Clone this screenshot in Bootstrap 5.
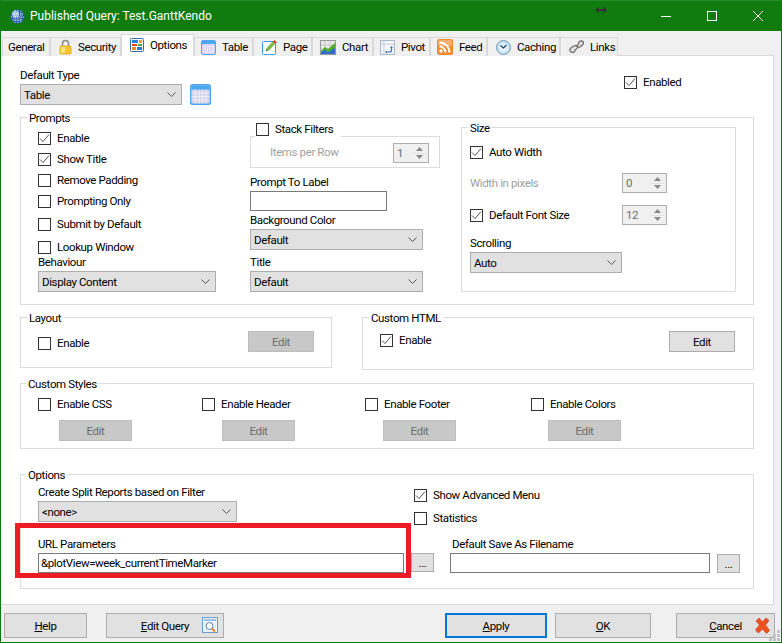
<!DOCTYPE html>
<html lang="en">
<head>
<meta charset="UTF-8" />
<title>Published Query: Test.GanttKendo</title>
<link href="https://cdn.jsdelivr.net/npm/bootstrap@5.3.0/dist/css/bootstrap.min.css" rel="stylesheet" />
<style>
  html, body { margin: 0; height: 100%; overflow: hidden; background: #f0f0f0; }
  body, .form-select, .form-control, .btn { font: 11.5px/16px Roboto, "Liberation Sans", sans-serif; letter-spacing: -.38px; color: #000; }

  /* window */
  .win { position: relative; width: 782px; height: 643px; border: 1px solid #107c10; border-top: 0; background: #f0f0f0; }
  .titlebar { height: 31px; background: #107c10; border-top: 1px solid #2a8a2a; color: #fff; padding-left: 9px; flex: none; }
  .titlebar .ttl { margin-left: 5px; font-size: 12px; letter-spacing: 0; }
  .capbtn { width: 46px; height: 30px; display: flex; align-items: center; justify-content: center; }
  .size-cursor { position: absolute; left: 594px; top: 6px; }

  /* tabs */
  .tabstrip { height: 24px; flex: none; padding-left: 1px; align-items: flex-end; border: 0; flex-wrap: nowrap; position: relative; z-index: 1; }
  .tabstrip .nav-link { height: 19px; padding: 0; border: 1px solid #d9d9d9; border-bottom: 0; border-radius: 0; background: #f0f0f0; color: #000; display: flex; align-items: center; }
  .tabstrip .nav-link + .nav-link { border-left: 0; }
  .tabstrip .nav-link.active { height: 22px; margin-bottom: -1px; padding-bottom: 2px; background: #fff; border-left: 1px solid #d9d9d9; border-color: #d9d9d9; position: relative; z-index: 2; }
  .tabstrip .nav-link svg { margin-right: 6px; flex: none; }
  .t1 { width: 48px; padding-left: 5px !important; }
  .t2 { width: 71px; padding-left: 8px !important; }
  .t3 { width: 73px; padding-left: 8px !important; }
  .t4 { width: 59px; padding-left: 6px !important; }
  .t5 { width: 59px; padding-left: 8px !important; }
  .t6 { width: 61px; padding-left: 7px !important; }
  .t7 { width: 57px; padding-left: 6px !important; }
  .t8 { width: 57px; padding-left: 6px !important; }
  .t9 { width: 73px; padding-left: 8px !important; }
  .t10 { width: 58px; padding-left: 8px !important; }

  .tabpane { height: 550px; flex: none; width: 773px; background: #fff; border: 1px solid #d9d9d9; border-left: 0; padding: 11px 0 0 19px; }

  /* group boxes */
  .grp { border: 1px solid #dcdcdc; padding: 0; margin: 0; }
  .grp-full { width: 734px; }
  .grp > legend { float: none; width: auto; height: 16px; font-size: 11.5px; line-height: 18px; margin: 0 0 0 6px; padding: 0 2px; }
  .grp.lg5 > legend { margin-left: 5px; }
  .lbl { display: block; height: 16px; line-height: 16px; margin: 0 0 1px; white-space: nowrap; }
  .lbl-off { color: #a0a0a0; }

  /* controls */
  .form-select.sel { height: 21px; min-height: 0; padding: 0 16px 0 3px; border: 1px solid #adadad; border-radius: 0; background-color: #e1e1e1; box-shadow: none;
    background-image: url("data:image/svg+xml,%3csvg xmlns='http://www.w3.org/2000/svg' viewBox='0 0 9 5'%3e%3cpath fill='none' stroke='%23555' d='M.5.5l4 4 4-4'/%3e%3c/svg%3e");
    background-size: 9px 5px; background-position: right 5px center; }
  .form-control.txt { height: 20px; min-height: 0; padding: 0 2px; border: 1px solid #7a7a7a; border-radius: 0; background: #fff; box-shadow: none; }
  .chk { height: 16px; white-space: nowrap; }
  .chk .form-check-input { width: 13px; height: 13px; margin: 0 6px 0 0; border: 1px solid #333; border-radius: 0; background-color: #fff; flex: none; box-shadow: none; }
  .chk .form-check-input:checked { background-color: #fff; border-color: #333; background-size: 11px 11px;
    background-image: url("data:image/svg+xml,%3csvg xmlns='http://www.w3.org/2000/svg' viewBox='0 0 11 11'%3e%3cpath fill='none' stroke='%23555' d='M1 5.500l3 3 6-7'/%3e%3c/svg%3e"); }
  .chk .form-check-label { line-height: 16px; }

  .spin { height: 20px; border: 1px solid #adadad; background: #f0f0f0; color: #6d6d6d; padding-left: 3px; line-height: 18px; }
  .spin-w { width: 45px; }
  .spin-n { width: 36px; }
  .spin-arrows { width: 15px; margin: 1px 1px 1px auto; background: #e4e4e4; gap: 1px; }
  .spin-arrows span { flex: 1; background: #f0f0f0; display: flex; align-items: center; justify-content: center; }

  .btn.wbtn { height: 25px; padding: 0; border: 1px solid #adadad; border-radius: 0; background: #e1e1e1; color: #000; display: flex; align-items: center; justify-content: center; }
  .btn.wbtn-edit { height: 21px; width: 66px; }
  .btn.wbtn-off, .btn.wbtn-off:disabled { background: #c8c8c8; border-color: #bdbdbd; color: #6d6d6d; opacity: 1; }
  .btn.wbtn-dots { height: 19px; width: 23px; flex: none; margin-left: 7px; line-height: 10px; }

  /* prompts group */
  .prompts { height: 196px; margin-top: 4px; }
  .p-left { width: 178px; padding-top: 5px; margin: 0 34px 0 17px; }
  .p-left .chk { margin-bottom: 5px; }
  .p-left .chk.wide { margin-bottom: 7px; }
  .p-left .chk.last { margin-bottom: -1px; }
  .p-mid { width: 190px; margin-right: 21px; }
  .stack-head { position: relative; z-index: 1; width: max-content; margin: -4px 0 -1px 5px; padding: 0 8px 0 1px; background: #fff; }
  .stack { height: 32px; border: 1px solid #dcdcdc; padding: 6px 10px 0 19px; }
  .p-mid .after-stack { margin-top: 6px; }
  .w137 { width: 137px; }
  .w173 { width: 173px; }
  .w162 { width: 162px; }
  .mt-1px { margin-top: 1px; }
  .mt-4px { margin-top: 4px; }
  .enabled-chk { margin: 7px 0 0 413px; }
  .sizebox { width: 275px; height: 173px; margin-top: -6px; }
  .sizebody { padding: 9px 0 0 8px; width: 205px; }
  .sizebody .r1 { height: 20px; margin-top: 13px; }
  .sizebody .r2 { height: 20px; margin-top: 12px; }
  .sizebody .r3 { margin-top: 10px; }
  .w152 { width: 152px; }

  /* layout / custom html */
  .layoutbox { width: 312px; height: 59px; margin-right: 30px; }
  .htmlbox { width: 392px; height: 61px; }
  .editrow { padding: 6px 17px 0; }
  .htmlbox .editrow { padding-right: 18px; }
  .editrow .low { margin-top: 4px; }

  /* custom styles */
  .stylesbox { height: 74px; margin-top: 5px; }
  .stylesgrid { display: grid; grid-template-columns: 164px 163px 166px 120px; padding: 5px 0 0 17px; }
  .stylesgrid .btn { width: 73px; height: 21px; margin-top: 8px; }
  .stylesgrid > div:nth-child(1) .btn { margin-left: 21px; }
  .stylesgrid > div:nth-child(2) .btn { margin-left: 20px; }
  .stylesgrid > div:nth-child(3) .btn { margin-left: 18px; }
  .stylesgrid > div:nth-child(4) .btn { margin-left: 17px; }

  /* options */
  .optionsbox { height: 123px; margin-top: 17px; }
  .opt-top { height: 38px; padding-left: 17px; margin: 2px 0 14px; }
  .opt-left { width: 376px; }
  .opt-left .form-select { width: 199px; }
  .opt-right { padding-top: 3px; }
  .opt-right .chk { margin-bottom: 7px; }
  .opt-bottom { padding-left: 17px; }
  .url-wrap { position: relative; margin-right: 16px; }
  .w366 { width: 366px; }
  .w260 { width: 260px; }
  .red-mark { position: absolute; left: -23px; top: -13px; width: 396px; height: 55px; border: 5px solid #ed1c24; pointer-events: none; }
  .save-wrap .lbl { margin-left: 2px; }
  .save-wrap .btn { margin-top: 1px; }

  /* footer */
  .footbar { flex: 1; padding: 8px 6px 0 3px; position: relative; }
  .b-help { width: 83px; margin-right: 19px; }
  .b-edit { width: 118px; position: relative; }
  .b-apply { width: 102px; margin-left: auto; margin-right: 8px; border: 2px solid #0078d7 !important; }
  .b-ok { width: 96px; margin-right: 25px; }
  .b-cancel { width: 99px; position: relative; }
  .b-edit svg, .b-cancel svg { position: absolute; right: 4px; top: 3px; }
  .grip { position: absolute; right: 1px; bottom: 1px; }
</style>
</head>
<body>
<svg width="0" height="0" class="d-block position-absolute">
  <symbol id="ico-table" viewBox="0 0 15 15">
    <rect x=".5" y=".5" width="14" height="14" rx="1.500" fill="#d4d1ea" stroke="#4aa8f0"/>
    <rect x="1" y="1" width="13" height="3" fill="#4aa8f0"/>
    <path d="M1 6.500h13M1 9h13M1 11.500h13M4 4v10M6.500 4v10M9 4v10M11.500 4v10" stroke="#f4f3fb" stroke-width=".6"/>
  </symbol>
</svg>
<div class="win d-flex flex-column">

  <div class="titlebar d-flex align-items-center">
    <svg width="15" height="15" viewBox="0 0 15 15">
      <circle cx="7.500" cy="7.500" r="7" fill="#2a5fa8"/>
      <circle cx="5.500" cy="5" r="3.500" fill="#9fc0e8"/>
      <path d="M2 5h11M1 8h13M2.500 11h10M5 1v13M8 1v13M11 2v11" stroke="#e8f0fa" stroke-width=".9" stroke-dasharray="1 1"/>
    </svg>
    <span class="ttl">Published Query: Test.GanttKendo</span>
    <div class="ms-auto d-flex">
      <span class="capbtn"><svg width="10" height="10" viewBox="0 0 10 10"><path d="M0 5.500h10" stroke="#fff"/></svg></span>
      <span class="capbtn"><svg width="10" height="10" viewBox="0 0 10 10"><rect x=".5" y=".5" width="9" height="9" fill="none" stroke="#fff"/></svg></span>
      <span class="capbtn"><svg width="10" height="10" viewBox="0 0 10 10"><path d="M0 0l10 10M10 0L0 10" stroke="#fff"/></svg></span>
    </div>
    <svg class="size-cursor" width="12" height="8" viewBox="0 0 12 8"><path d="M0 4l3.500-3.500V3h5V.5L12 4 8.500 7.500V5h-5v2.500z" fill="#333"/></svg>
  </div>

  <ul class="nav nav-tabs tabstrip">
    <li class="nav-item"><a class="nav-link t1" href="#">General</a></li>
    <li class="nav-item"><a class="nav-link t2" href="#">
      <svg width="13" height="16" viewBox="0 0 13 16"><path d="M3.500 7V4.500a3 3 0 0 1 6 0V7" fill="none" stroke="#8a8a80" stroke-width="1.500"/><rect x="1" y="7" width="11" height="8" rx="1" fill="#f7c62f" stroke="#d9a010" stroke-width=".7"/><rect x="2" y="8" width="4" height="6" fill="#fde57e"/></svg>Security</a></li>
    <li class="nav-item"><a class="nav-link t3 active" href="#">
      <svg width="14" height="14" viewBox="0 0 14 14"><rect x=".5" y=".5" width="13" height="13" rx="1" fill="#fff" stroke="#3b6db0"/><rect x="2" y="2" width="6" height="3" fill="#2a7fd6"/><rect x="9" y="2" width="3" height="3" fill="#e8a020"/><rect x="2" y="6" width="5" height="2" fill="#e0401f"/><rect x="8" y="6" width="4" height="2" fill="#3ba53b"/><rect x="2" y="9" width="4" height="3" fill="#e8862a"/><rect x="7" y="9" width="5" height="3" fill="#3576c8"/></svg>Options</a></li>
    <li class="nav-item"><a class="nav-link t4" href="#"><svg width="15" height="15"><use href="#ico-table"/></svg>Table</a></li>
    <li class="nav-item"><a class="nav-link t5" href="#">
      <svg width="15" height="15" viewBox="0 0 15 15"><rect x=".5" y="1.500" width="13" height="13" rx="1" fill="#fff" stroke="#3f9bea"/><path d="M4 11l1-3 6-6.500 2 2L7 10z" fill="#7dc242" stroke="#4d8f22" stroke-width=".5"/><path d="M11 1.500L12.500 0 15 2.500 13 3.500z" fill="#e0402a"/><path d="M4 11l.5-1.500 1 1z" fill="#333"/></svg>Page</a></li>
    <li class="nav-item"><a class="nav-link t6" href="#">
      <svg width="16" height="15" viewBox="0 0 16 15"><rect x=".5" y=".5" width="15" height="14" fill="#e8e8e8" stroke="#9a9a9a"/><path d="M1 5h14M1 9h14M5 1v13M10 1v13" stroke="#bdbdbd" stroke-width=".7"/><path d="M1 11l4-4 3 2 7-6v6l-7 3-3-1-4 2z" fill="#4cae2a"/><path d="M1 14v-2l4-2 3 2 7-4v6z" fill="#2c6fd0"/></svg>Chart</a></li>
    <li class="nav-item"><a class="nav-link t7" href="#">
      <svg width="15" height="15" viewBox="0 0 15 15"><rect x=".5" y=".5" width="14" height="14" fill="#f4f6fa" stroke="#a9b8cc"/><path d="M1 4h13M4 1v13" stroke="#c3cfdf"/><path d="M6 12h3.500a2 2 0 0 0 2-2V7" fill="none" stroke="#3a72b8" stroke-width="1.200"/><path d="M10 8l1.500-2L13 8zM7 10.500L5 12l2 1.500z" fill="#3a72b8"/></svg>Pivot</a></li>
    <li class="nav-item"><a class="nav-link t8" href="#">
      <svg width="16" height="16" viewBox="0 0 16 16"><rect width="16" height="16" rx="2.500" fill="#f08a2c"/><rect x="1" y="1" width="14" height="6" rx="2" fill="#f8b070"/><circle cx="4" cy="12" r="1.800" fill="#fff"/><path d="M2.500 7.500a6 6 0 0 1 6 6M2.500 3.500a10 10 0 0 1 10 10" fill="none" stroke="#fff" stroke-width="2"/></svg>Feed</a></li>
    <li class="nav-item"><a class="nav-link t9" href="#">
      <svg width="15" height="15" viewBox="0 0 15 15"><circle cx="7.500" cy="7.500" r="7" fill="#bcdcf2" stroke="#7a9cb8"/><circle cx="7.500" cy="7.500" r="5" fill="#e2f1fb"/><path d="M4.500 5.500l3 2.500 3-3" fill="none" stroke="#223a5a" stroke-width="1.200"/></svg>Caching</a></li>
    <li class="nav-item"><a class="nav-link t10" href="#">
      <svg width="15" height="14" viewBox="0 0 15 14"><path d="M2 12c-2-1-1-4 1-5l3-1.500c2-.5 3 1 2 2.500l-3 4c-1 1-2 .5-3 0zM8 7l2-5c1-1.500 3-1.500 4-.5s.5 3-1 4L9 8" fill="#ddd" stroke="#6a6a6a" stroke-width="1.200"/></svg>Links</a></li>
  </ul>

  <div class="tabpane">
    <!-- top row -->
    <div class="d-flex">
      <div>
        <label class="lbl">Default Type</label>
        <div class="d-flex">
          <select class="form-select sel w162"><option>Table</option></select>
          <svg class="ms-2" width="21" height="21"><use href="#ico-table"/></svg>
        </div>
      </div>
      <div class="chk enabled-chk d-flex align-items-center">
        <input class="form-check-input" type="checkbox" id="cEnabled" checked />
        <label class="form-check-label" for="cEnabled">Enabled</label>
      </div>
    </div>

    <!-- prompts -->
    <fieldset class="grp grp-full prompts">
      <legend>Prompts</legend>
      <div class="d-flex">
        <div class="p-left">
          <div class="chk d-flex align-items-center"><input class="form-check-input" type="checkbox" checked /><label class="form-check-label">Enable</label></div>
          <div class="chk d-flex align-items-center"><input class="form-check-input" type="checkbox" checked /><label class="form-check-label">Show Title</label></div>
          <div class="chk d-flex align-items-center"><input class="form-check-input" type="checkbox" /><label class="form-check-label">Remove Padding</label></div>
          <div class="chk wide d-flex align-items-center"><input class="form-check-input" type="checkbox" /><label class="form-check-label">Prompting Only</label></div>
          <div class="chk wide d-flex align-items-center"><input class="form-check-input" type="checkbox" /><label class="form-check-label">Submit by Default</label></div>
          <div class="chk last d-flex align-items-center"><input class="form-check-input" type="checkbox" /><label class="form-check-label">Lookup Window</label></div>
          <label class="lbl">Behaviour</label>
          <select class="form-select sel"><option>Display Content</option></select>
        </div>
        <div class="p-mid">
          <div class="chk stack-head d-flex align-items-center"><input class="form-check-input" type="checkbox" /><label class="form-check-label">Stack Filters</label></div>
          <div class="stack d-flex align-items-start justify-content-between">
            <span class="lbl-off mt-1px">Items per Row</span>
            <div class="spin spin-n d-flex">1<div class="spin-arrows d-flex flex-column"><span><svg width="7" height="4"><path d="M3.500 0L7 4H0z" fill="#888"/></svg></span><span><svg width="7" height="4"><path d="M0 0h7L3.500 4z" fill="#888"/></svg></span></div></div>
          </div>
          <label class="lbl after-stack">Prompt To Label</label>
          <input class="form-control txt w137" type="text" />
          <label class="lbl mt-1px">Background Color</label>
          <select class="form-select sel w173"><option>Default</option></select>
          <label class="lbl mt-4px">Title</label>
          <select class="form-select sel w173"><option>Default</option></select>
        </div>
        <fieldset class="grp sizebox">
          <legend>Size</legend>
          <div class="sizebody">
            <div class="chk d-flex align-items-center"><input class="form-check-input" type="checkbox" checked /><label class="form-check-label">Auto Width</label></div>
            <div class="r1 d-flex align-items-center justify-content-between">
              <span class="lbl-off">Width in pixels</span>
              <div class="spin spin-w d-flex">0<div class="spin-arrows d-flex flex-column"><span><svg width="7" height="4"><path d="M3.500 0L7 4H0z" fill="#888"/></svg></span><span><svg width="7" height="4"><path d="M0 0h7L3.500 4z" fill="#888"/></svg></span></div></div>
            </div>
            <div class="r2 d-flex align-items-center justify-content-between">
              <div class="chk d-flex align-items-center"><input class="form-check-input" type="checkbox" checked /><label class="form-check-label">Default Font Size</label></div>
              <div class="spin spin-w d-flex">12<div class="spin-arrows d-flex flex-column"><span><svg width="7" height="4"><path d="M3.500 0L7 4H0z" fill="#888"/></svg></span><span><svg width="7" height="4"><path d="M0 0h7L3.500 4z" fill="#888"/></svg></span></div></div>
            </div>
            <label class="lbl r3">Scrolling</label>
            <select class="form-select sel w152"><option>Auto</option></select>
          </div>
        </fieldset>
      </div>
    </fieldset>

    <!-- layout + custom html -->
    <div class="d-flex align-items-start mt-4px">
      <fieldset class="grp layoutbox">
        <legend>Layout</legend>
        <div class="editrow d-flex align-items-start justify-content-between">
          <div class="chk low d-flex align-items-center"><input class="form-check-input" type="checkbox" /><label class="form-check-label">Enable</label></div>
          <button class="btn wbtn wbtn-edit wbtn-off" disabled>Edit</button>
        </div>
      </fieldset>
      <fieldset class="grp htmlbox">
        <legend>Custom HTML</legend>
        <div class="editrow d-flex align-items-start justify-content-between">
          <div class="chk mt-1px d-flex align-items-center"><input class="form-check-input" type="checkbox" checked /><label class="form-check-label">Enable</label></div>
          <button class="btn wbtn wbtn-edit">Edit</button>
        </div>
      </fieldset>
    </div>

    <!-- custom styles -->
    <fieldset class="grp grp-full lg5 stylesbox">
      <legend>Custom Styles</legend>
      <div class="stylesgrid">
        <div><div class="chk d-flex align-items-center"><input class="form-check-input" type="checkbox" /><label class="form-check-label">Enable CSS</label></div><button class="btn wbtn wbtn-off" disabled>Edit</button></div>
        <div><div class="chk d-flex align-items-center"><input class="form-check-input" type="checkbox" /><label class="form-check-label">Enable Header</label></div><button class="btn wbtn wbtn-off" disabled>Edit</button></div>
        <div><div class="chk d-flex align-items-center"><input class="form-check-input" type="checkbox" /><label class="form-check-label">Enable Footer</label></div><button class="btn wbtn wbtn-off" disabled>Edit</button></div>
        <div><div class="chk d-flex align-items-center"><input class="form-check-input" type="checkbox" /><label class="form-check-label">Enable Colors</label></div><button class="btn wbtn wbtn-off" disabled>Edit</button></div>
      </div>
    </fieldset>

    <!-- options -->
    <fieldset class="grp grp-full lg5 optionsbox">
      <legend>Options</legend>
      <div class="opt-top d-flex">
        <div class="opt-left">
          <label class="lbl">Create Split Reports based on Filter</label>
          <select class="form-select sel"><option>&lt;none&gt;</option></select>
        </div>
        <div class="opt-right">
          <div class="chk d-flex align-items-center"><input class="form-check-input" type="checkbox" checked /><label class="form-check-label">Show Advanced Menu</label></div>
          <div class="chk d-flex align-items-center"><input class="form-check-input" type="checkbox" /><label class="form-check-label">Statistics</label></div>
        </div>
      </div>
      <div class="opt-bottom d-flex">
        <div class="url-wrap">
          <label class="lbl">URL Parameters</label>
          <div class="d-flex align-items-start">
            <input class="form-control txt w366" type="text" value="&amp;plotView=week_currentTimeMarker" />
            <button class="btn wbtn wbtn-dots">...</button>
          </div>
          <div class="red-mark"></div>
        </div>
        <div class="save-wrap">
          <label class="lbl">Default Save As Filename</label>
          <div class="d-flex align-items-start">
            <input class="form-control txt w260" type="text" />
            <button class="btn wbtn wbtn-dots">...</button>
          </div>
        </div>
      </div>
    </fieldset>
  </div>

  <div class="footbar d-flex align-items-start">
    <button class="btn wbtn b-help"><span><u>H</u>elp</span></button>
    <button class="btn wbtn b-edit"><span><u>E</u>dit Query</span>
      <svg width="17" height="17" viewBox="0 0 17 17"><rect x=".5" y=".5" width="15" height="15" fill="#eaf2fa" stroke="#6f9bc8"/><rect x="2" y="2" width="12" height="2" fill="#9cc0e4"/><circle cx="7.500" cy="9" r="3.500" fill="#fff" stroke="#5b7ea8"/><path d="M10 11.500l3 3" stroke="#e8862a" stroke-width="2"/></svg>
    </button>
    <button class="btn wbtn b-apply"><span><u>A</u>pply</span></button>
    <button class="btn wbtn b-ok"><span><u>O</u>K</span></button>
    <button class="btn wbtn b-cancel"><span><u>C</u>ancel</span>
      <svg width="15" height="17" viewBox="0 0 15 17"><path d="M1 4l3-3 3.500 4L11 1l3 2.500L10.500 8l4 5.500-3 3L7.500 12 3.500 16 .5 13l4-5z" fill="#f0501e" stroke="#c8301a" stroke-width=".6"/></svg>
    </button>
    <svg class="grip" width="11" height="11" viewBox="0 0 11 11"><path d="M8 0h3v3H8zM4 4h3v3H4zM8 4h3v3H8zM0 8h3v3H0zM4 8h3v3H4zM8 8h3v3H8z" fill="#c4c4c4"/></svg>
  </div>
</div>
<script src="https://cdn.jsdelivr.net/npm/bootstrap@5.3.0/dist/js/bootstrap.bundle.min.js"></script>
</body>
</html>
